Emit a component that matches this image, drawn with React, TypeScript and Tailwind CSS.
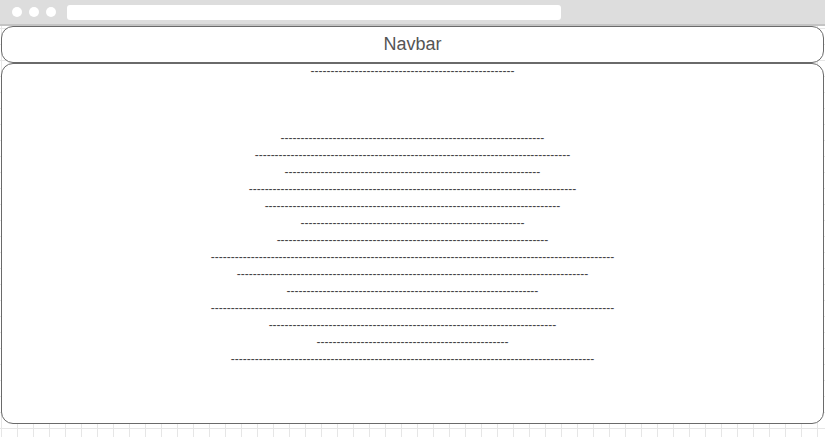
const lines = [66, 79, 64, 82, 74, 56, 68, 101, 88, 63, 101, 72, 48, 91];

export default function App() {
  return (
    <div className="w-[825px] h-[437px] overflow-hidden bg-white bg-[linear-gradient(to_right,#e6e6e6_1px,transparent_1px),linear-gradient(to_bottom,#e6e6e6_1px,transparent_1px)] bg-[size:16px_16px] bg-[position:1px_12px] font-['Liberation_Sans',Arial,sans-serif]">
      <div className="h-[26px] bg-[#dddddd] border-b-2 border-[#c4c4c4] flex items-center pl-[12px] pr-[264px]">
        <div className="flex gap-[7px]">
          <span className="w-[10px] h-[10px] rounded-full bg-white" />
          <span className="w-[10px] h-[10px] rounded-full bg-white" />
          <span className="w-[10px] h-[10px] rounded-full bg-white" />
        </div>
        <div className="ml-[11px] flex-1 h-[15px] rounded-[3px] bg-white" />
      </div>
      <div className="px-[1px]">
        <div className="h-[37px] border border-[#6a6a6a] rounded-[12px] bg-white flex items-center justify-center text-[18px] text-[#555555]">
          Navbar
        </div>
        <div className="h-[361px] border border-[#6a6a6a] rounded-[12px] bg-white flex flex-col items-center text-[12px] leading-[17px] text-[#444444]">
          <div className="-mt-[1px]">{"-".repeat(51)}</div>
          <div className="mt-[50px] flex flex-col items-center">
            {lines.map((n, i) => (
              <div key={i}>{"-".repeat(n)}</div>
            ))}
          </div>
        </div>
      </div>
    </div>
  );
}
